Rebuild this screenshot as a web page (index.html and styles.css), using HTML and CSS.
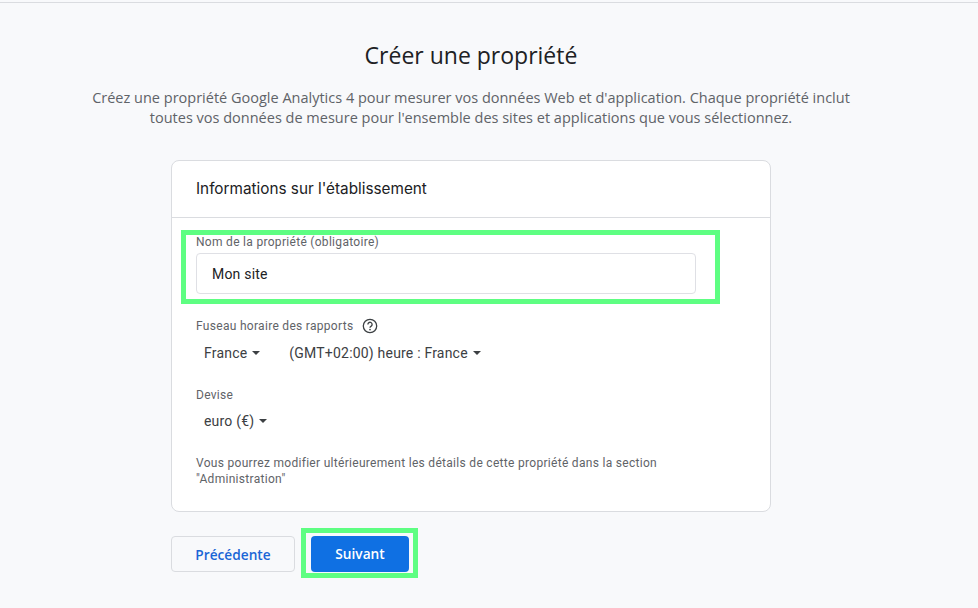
FILE: index.html
```html
<!DOCTYPE html>
<html lang="fr">
<head>
<meta charset="utf-8">
<title>Créer une propriété</title>
<link rel="stylesheet" href="styles.css">
</head>
<body>
<main class="page">
  <h1 class="title">Créer une propriété</h1>
  <p class="intro">Créez une propriété Google Analytics 4 pour mesurer vos données Web et d'application. Chaque propriété inclut<br>toutes vos données de mesure pour l'ensemble des sites et applications que vous sélectionnez.</p>
  <section class="card">
    <h2 class="card-title">Informations sur l'établissement</h2>
    <div class="card-body">
      <div class="name-field">
        <span class="highlight highlight-field"></span>
        <label class="label label-name">Nom de la propriété (obligatoire)</label>
        <div class="input">Mon site</div>
      </div>
      <div class="label label-tz">Fuseau horaire des rapports
        <svg class="help" width="16" height="16" viewBox="0 0 16 16" aria-hidden="true"><circle cx="8" cy="8" r="6.7" fill="none" stroke="#3c4043" stroke-width="1.3"/><path d="M5.9 6.4a2.1 2.1 0 1 1 3.3 1.7c-.8.5-1.2.9-1.2 1.7" fill="none" stroke="#3c4043" stroke-width="1.3"/><circle cx="8" cy="11.6" r=".85" fill="#3c4043"/></svg>
      </div>
      <div class="selects">
        <span class="select select-country">France<i class="caret"></i></span>
        <span class="select">(GMT+02:00) heure : France<i class="caret"></i></span>
      </div>
      <div class="label label-currency">Devise</div>
      <div class="selects selects-currency">
        <span class="select">euro (€)<i class="caret"></i></span>
      </div>
      <p class="note">Vous pourrez modifier ultérieurement les détails de cette propriété dans la section<br>"Administration"</p>
    </div>
  </section>
  <div class="actions">
    <button class="btn btn-secondary" type="button">Précédente</button>
    <div class="primary-wrap">
      <span class="highlight highlight-btn"></span>
      <button class="btn btn-primary" type="button">Suivant</button>
    </div>
  </div>
</main>
</body>
</html>
```
FILE: styles.css
```css
* { box-sizing: border-box; }
html, body { margin: 0; height: 100%; }
body {
  background: #f8f9fb;
  font-family: Roboto, "Liberation Sans", sans-serif;
  color: #202124;
  overflow: hidden;
}
.page {
  height: 608px;
  margin-top: 2px;
  padding-right: 36px;
  border-top: 1px solid #dadce0;
  display: flex;
  flex-direction: column;
  align-items: center;
}
.title {
  margin: 34px 0 0;
  font: 400 23px/36px "Open Sans", sans-serif;
  color: #202124;
}
.intro {
  margin: 15px 0 0;
  width: 800px;
  text-align: center;
  font: 400 14.5px/20px "Open Sans", sans-serif;
  color: #5f6368;
}
.card {
  width: 600px;
  height: 352px;
  margin: 32px 0 0;
  background: #fff;
  border: 1px solid #dadce0;
  border-radius: 8px;
}
.card-title {
  margin: 0;
  height: 57px;
  padding: 18px 24px 0;
  font: 400 15.3px/20px "Inter", Roboto, sans-serif;
  color: #202124;
  border-bottom: 1px solid #dadce0;
}
.card-body { padding: 0 24px; }
.name-field { position: relative; padding-top: 16px; }
.label {
  display: block;
  font-size: 12px;
  line-height: 16px;
  letter-spacing: .3px;
  color: #5f6368;
}
.input {
  margin-top: 3px;
  width: 500px;
  height: 41px;
  border: 1px solid #dfe0e5;
  border-radius: 4px;
  padding: 0 15px;
  font-size: 14px;
  line-height: 40px;
  letter-spacing: .2px;
  color: #202124;
}
.label-tz { margin-top: 24px; display: flex; align-items: center; gap: 9px; }
.help { display: block; }
.selects { display: flex; margin-top: 7px; padding-left: 8px; height: 24px; align-items: center; font-size: 14px; letter-spacing: .2px; color: #3c4043; }
.select { display: inline-flex; align-items: center; }
.select-country { margin-right: 29px; }
.caret {
  margin-left: 5px;
  width: 0;
  height: 0;
  border-left: 4.5px solid transparent;
  border-right: 4.5px solid transparent;
  border-top: 4.5px solid #3c4043;
}
.label-currency { margin-top: 22px; }
.selects-currency { margin-top: 6px; }
.note {
  margin: 22px 0 0;
  font-size: 12px;
  line-height: 16px;
  letter-spacing: .3px;
  color: #5f6368;
}
.actions {
  width: 600px;
  display: flex;
  align-items: center;
  gap: 16px;
  margin-top: 24px;
}
.btn {
  height: 36px;
  border-radius: 4px;
  font: 600 13.7px/34px "Open Sans", Roboto, sans-serif;
  cursor: pointer;
}
.btn-secondary { width: 124px; background: transparent; border: 1px solid #dadce0; color: #1a66d6; }
.btn-primary { display: block; width: 98px; background: #0f70e3; border: 0; color: #fff; }
.primary-wrap { position: relative; }
.highlight { position: absolute; border: 5px solid #5efe82; pointer-events: none; }
.highlight-field { left: -15px; top: 12px; width: 539px; height: 74px; }
.highlight-btn { left: -10px; top: -8px; width: 117px; height: 50px; }
```
